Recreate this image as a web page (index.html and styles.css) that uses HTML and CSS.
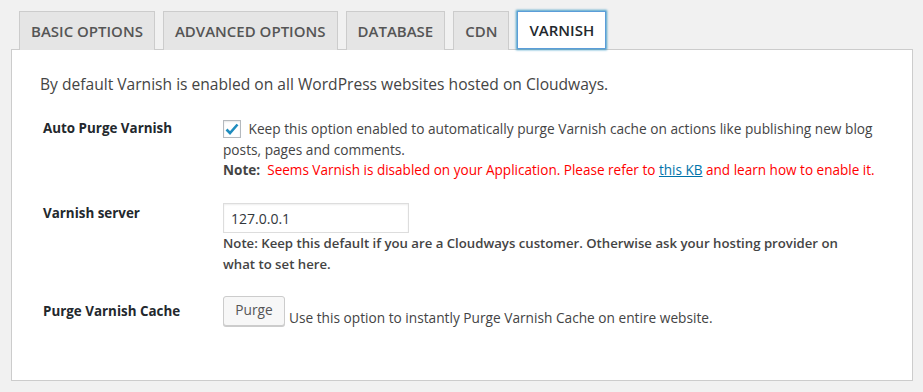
FILE: index.html
```html
<!DOCTYPE html>
<html>
<head>
<meta charset="utf-8">
<link rel="stylesheet" href="styles.css">
</head>
<body>
<div class="wrap">
  <nav class="tabs">
    <a class="tab">BASIC OPTIONS</a>
    <a class="tab">ADVANCED OPTIONS</a>
    <a class="tab">DATABASE</a>
    <a class="tab">CDN</a>
    <a class="tab active">VARNISH</a>
  </nav>
  <section class="panel">
    <p class="intro">By default Varnish is enabled on all WordPress websites hosted on Cloudways.</p>
    <div class="form">
      <div class="row r1">
        <div class="label">Auto Purge Varnish</div>
        <div class="field">
          <div class="desc"><span class="check"><svg width="14" height="12" viewBox="0 0 14 12"><path d="M1.5 6.5 L5 10 L12.5 1.5" fill="none" stroke="#1e8cbe" stroke-width="2.6"/></svg></span> Keep this option enabled to automatically purge Varnish cache on actions like publishing new blog posts, pages and comments.</div>
          <div class="desc red-line"><b class="note">Note:</b>&nbsp; <span class="red">Seems Varnish is disabled on your Application. Please refer to <a class="link" href="#">this KB</a> and learn how to enable it.</span></div>
        </div>
      </div>
      <div class="row r2">
        <div class="label">Varnish server</div>
        <div class="field">
          <input class="input" type="text" value="127.0.0.1">
          <div class="desc bold">Note: Keep this default if you are a Cloudways customer. Otherwise ask your hosting provider on what to set here.</div>
        </div>
      </div>
      <div class="row r3">
        <div class="label">Purge Varnish Cache</div>
        <div class="field inline">
          <button class="btn">Purge</button>
          <span class="desc">Use this option to instantly Purge Varnish Cache on entire website.</span>
        </div>
      </div>
    </div>
  </section>
</div>
</body>
</html>
```

FILE: styles.css
```css
html, body { margin: 0; padding: 0; }
body {
  background: #f1f1f1;
  font-family: "Open Sans", "Noto Sans", sans-serif;
  color: #444;
  width: 923px;
  height: 392px;
  overflow: hidden;
}
.wrap { padding: 11px 11px 0 11px; }
.tabs {
  display: flex;
  gap: 8px;
  padding-left: 8px;
  height: 38px;
  position: relative;
  z-index: 1;
}
.tab {
  box-sizing: border-box;
  height: 39px;
  padding: 0 11px;
  border: 1px solid #ccc;
  border-bottom: none;
  background: #e5e5e5;
  color: #555;
  font-size: 15px;
  font-weight: 600;
  display: flex;
  align-items: center;
}
.tab.active {
  background: #fff;
  color: #23282d;
  border: 1px solid #5b9dd9;
  box-shadow: 0 0 2px 1px rgba(30,140,190,.8);
  height: 38px;
}
.panel {
  box-sizing: border-box;
  height: 332px;
  width: 902px;
  background: #fff;
  border: 1px solid #ccc;
  padding: 0 0 0 28px;
}
.intro {
  margin: 22px 0 0 0;
  font-size: 15.6px;
  line-height: 24px;
  color: #444;
}
.form { padding-left: 3px; margin-top: 22px; }
.row { display: grid; grid-template-columns: 180px 665px; }
.label {
  font-weight: 700;
  font-size: 13.4px;
  color: #23282d;
  line-height: 21px;
}
.desc { font-size: 13.7px; line-height: 21px; color: #444; }
.red-line { font-size: 13.55px; }
.check {
  display: inline-block;
  box-sizing: border-box;
  width: 18px; height: 18px;
  border: 1px solid #b4b9be;
  box-shadow: inset 0 1px 2px rgba(0,0,0,.1);
  vertical-align: -4px;
  margin-right: 4px;
  position: relative;
}
.check svg { position: absolute; left: 1px; top: 2px; }
.note { font-weight: 700; color: #444; }
.red { color: #f00; }
.link { color: #0073aa; text-decoration: underline; }
.r2 { margin-top: 22px; }
.input {
  display: block;
  box-sizing: border-box;
  width: 186px; height: 30px;
  border: 1px solid #ddd;
  box-shadow: inset 0 1px 2px rgba(0,0,0,.07);
  font-family: inherit;
  font-size: 14px;
  color: #32373c;
  padding: 0 7px;
  margin: 0;
}
.bold { font-weight: 600; font-size: 13.2px; max-width: 635px; }
.r3 { margin-top: 21px; }
.r3 .label { margin-top: 5px; }
.inline { display: flex; align-items: flex-end; gap: 4px; }
.inline .desc { margin-bottom: -2px; }
.btn {
  box-sizing: border-box;
  height: 30px;
  width: 62px;
  border: 1px solid #ccc;
  border-radius: 3px;
  background: #f7f7f7;
  box-shadow: 0 1px 0 #ccc;
  font-family: inherit;
  font-size: 13.7px;
  color: #555;
  padding: 0 0 3px 0;
  margin: 0;
}
```
